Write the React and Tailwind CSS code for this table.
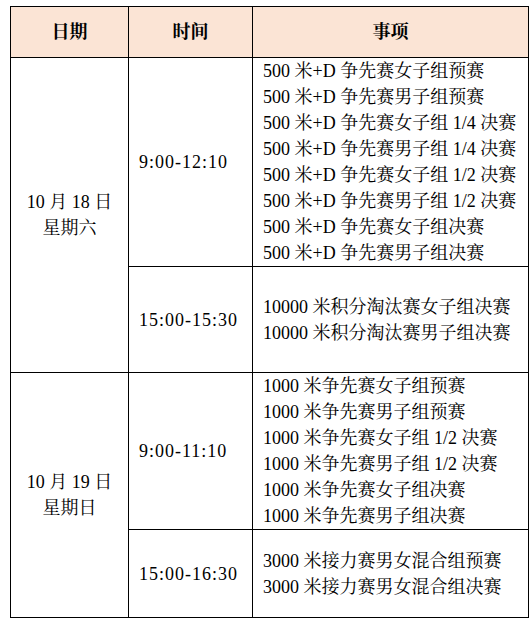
import React from "react";

const font = {
  fontFamily:
    '"Liberation Serif", "Noto Serif CJK SC", "Noto Sans CJK SC", serif',
};

const days = [
  {
    date: "10 月 18 日",
    week: "星期六",
    slots: [
      {
        time: "9:00-12:10",
        height: "h-[209px]",
        events: [
          "500 米+D 争先赛女子组预赛",
          "500 米+D 争先赛男子组预赛",
          "500 米+D 争先赛女子组 1/4 决赛",
          "500 米+D 争先赛男子组 1/4 决赛",
          "500 米+D 争先赛女子组 1/2 决赛",
          "500 米+D 争先赛男子组 1/2 决赛",
          "500 米+D 争先赛女子组决赛",
          "500 米+D 争先赛男子组决赛",
        ],
      },
      {
        time: "15:00-15:30",
        height: "h-[106px]",
        events: ["10000 米积分淘汰赛女子组决赛", "10000 米积分淘汰赛男子组决赛"],
      },
    ],
  },
  {
    date: "10 月 19 日",
    week: "星期日",
    slots: [
      {
        time: "9:00-11:10",
        height: "h-[157px]",
        events: [
          "1000 米争先赛女子组预赛",
          "1000 米争先赛男子组预赛",
          "1000 米争先赛女子组 1/2 决赛",
          "1000 米争先赛男子组 1/2 决赛",
          "1000 米争先赛女子组决赛",
          "1000 米争先赛男子组决赛",
        ],
      },
      {
        time: "15:00-16:30",
        height: "h-[88px]",
        events: ["3000 米接力赛男女混合组预赛", "3000 米接力赛男女混合组决赛"],
      },
    ],
  },
];

export default function App() {
  return (
    <div className="w-[530px] h-[620px] bg-white pt-[6px] pl-[10px]" style={font}>
      <table className="table-fixed border-collapse w-[518px] text-[18px] leading-[26px] text-black">
        <colgroup>
          <col className="w-[118px]" />
          <col className="w-[124px]" />
          <col className="w-[276px]" />
        </colgroup>
        <thead>
          <tr className="h-[51px] bg-[#fbe4d5]">
            <th className="border border-black font-bold text-center">日期</th>
            <th className="border border-black font-bold text-center">时间</th>
            <th className="border border-black font-bold text-center">事项</th>
          </tr>
        </thead>
        <tbody>
          {days.map((day) =>
            day.slots.map((slot, i) => (
              <tr key={day.date + slot.time} className={slot.height}>
                {i === 0 && (
                  <td
                    rowSpan={day.slots.length}
                    className="border border-black text-center align-middle p-0"
                  >
                    <p>{day.date}</p>
                    <p>{day.week}</p>
                  </td>
                )}
                <td className="border border-black align-middle pl-[10px] p-0 tracking-[1px]">
                  {slot.time}
                </td>
                <td className="border border-black align-middle pl-[10px] p-0 whitespace-nowrap">
                  {slot.events.map((e) => (
                    <p key={e}>{e}</p>
                  ))}
                </td>
              </tr>
            ))
          )}
        </tbody>
      </table>
    </div>
  );
}
